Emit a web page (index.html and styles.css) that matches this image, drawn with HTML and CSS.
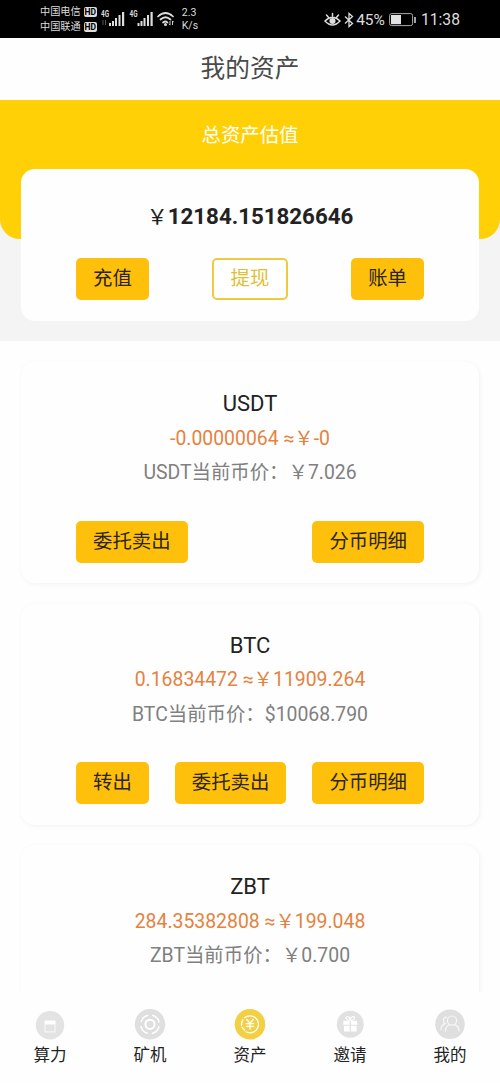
FILE: index.html
```html
<!DOCTYPE html>
<html lang="zh-CN">
<head>
<meta charset="utf-8">
<title>我的资产</title>
<link rel="stylesheet" href="styles.css">
</head>
<body>
<div class="app">
  <header class="status">
    <div class="carriers">
      <div class="carrier">中国电信<span class="hd">HD</span></div>
      <div class="carrier">中国联通<span class="hd">HD</span></div>
    </div>
    <svg class="signals" width="76" height="20" viewBox="0 0 76 20">
      <g fill="#ddd">
        <text class="g4" x="0" y="8" textLength="8" lengthAdjust="spacingAndGlyphs">4G</text>
        <text class="g4" x="28.5" y="8" textLength="8" lengthAdjust="spacingAndGlyphs">4G</text>
        <path d="M8 14h2v3h-2zM11 12h2v5h-2zM14 9h2v8h-2zM17.500 6h2v11h-2zM21 3h2.200v14h-2.200z"/>
        <path d="M36.500 14h2v3h-2zM39.500 12h2v5h-2zM42.500 9h2v8h-2zM46 6h2v11h-2zM49.500 3h2.200v14h-2.200z"/>
        <path d="M2 11v5M4.500 11v5" stroke="#555" stroke-width="1"/>
      </g>
      <g fill="none" stroke="#ddd" stroke-width="1.7" stroke-linecap="round">
        <path d="M57 7.500Q64.500 .500 72 7.500M59.500 10.500Q64.500 6 69.500 10.500M62 13.500Q64.500 11.500 66.500 13.500"/>
      </g>
      <circle cx="64.500" cy="15.500" r="1.500" fill="#ddd"/>
      <path d="M69 12v4M67.800 14.800l1.200 1.400M71.500 16v-4M71.500 11.800l1.200 1.400" fill="none" stroke="#ccc" stroke-width="1"/>
    </svg>
    <div class="speed"><span>2.3</span><span>K/s</span></div>
    <div class="right">
      <svg width="17" height="16" viewBox="0 0 17 16" fill="none" stroke="#ddd" stroke-width="1.500" stroke-linecap="round">
        <path d="M1 9Q8.500 1.500 16 9Q8.500 17 1 9ZM8.500 4V1.500M4.200 5L2.500 3M12.800 5L14.500 3"/>
        <circle cx="8.500" cy="9" r="2.300" fill="#ddd"/>
      </svg>
      <svg class="bt" width="10" height="16" viewBox="0 0 10 16" fill="none" stroke="#ddd" stroke-width="1.300">
        <path d="M1 4.500L8.500 11.500L5 14.500V1.500L8.500 4.500L1 11.500"/>
      </svg>
      <span class="pct">45%</span>
      <svg class="battery" width="28" height="14" viewBox="0 0 28 14">
        <rect x=".6" y=".6" width="23" height="12" rx="2" fill="none" stroke="#aaa" stroke-width="1"/>
        <rect x="2" y="2" width="10" height="9.200" fill="#e2e2e2"/>
        <path d="M26 4v6" stroke="#ccc" stroke-width="1.600"/>
      </svg>
      <span class="clock">11:38</span>
    </div>
  </header>

  <h1 class="title">我的资产</h1>

  <section class="hero">
    <div class="hero-bg"></div>
    <div class="hero-body">
      <div class="hero-label">总资产估值</div>
      <div class="total-card">
        <div class="total"><span class="yen">￥</span>12184.151826646</div>
        <div class="actions">
          <button class="btn">充值</button>
          <button class="btn outline">提现</button>
          <button class="btn">账单</button>
        </div>
      </div>
    </div>
  </section>

  <main class="list">
    <article class="coin">
      <h2 class="name">USDT</h2>
      <div class="amount">-0.00000064 ≈￥-0</div>
      <div class="price">USDT当前币价：￥7.026</div>
      <div class="actions">
        <button class="btn">委托卖出</button>
        <button class="btn">分币明细</button>
      </div>
    </article>
    <article class="coin">
      <h2 class="name">BTC</h2>
      <div class="amount">0.16834472 ≈￥11909.264</div>
      <div class="price">BTC当前币价：$10068.790</div>
      <div class="actions">
        <button class="btn">转出</button>
        <button class="btn">委托卖出</button>
        <button class="btn">分币明细</button>
      </div>
    </article>
    <article class="coin">
      <h2 class="name">ZBT</h2>
      <div class="amount">284.35382808 ≈￥199.048</div>
      <div class="price">ZBT当前币价：￥0.700</div>
    </article>
  </main>

  <nav class="tabs">
    <a class="tab">
      <svg width="32" height="32" viewBox="0 0 32 32">
        <circle cx="16" cy="17.200" r="14.200" fill="#e3e3e3"/>
        <rect x="10.500" y="12.600" width="11" height="3.800" rx="1" fill="#fff"/>
        <path d="M11 16v7.800h10v-7.800" fill="none" stroke="#f5f5f5" stroke-width="1.200"/>
      </svg>
      <span>算力</span>
    </a>
    <a class="tab">
      <svg width="32" height="32" viewBox="0 0 32 32">
        <circle cx="16" cy="16.300" r="15.200" fill="#dfdfdf"/>
        <circle cx="16" cy="16.300" r="9.300" fill="none" stroke="#fff" stroke-width="1.500" stroke-dasharray="10.600 4" stroke-dashoffset="-2"/>
        <circle cx="16" cy="16.300" r="4.600" fill="none" stroke="#fff" stroke-width="2"/>
      </svg>
      <span>矿机</span>
    </a>
    <a class="tab">
      <svg width="32" height="32" viewBox="0 0 32 32">
        <circle cx="16" cy="16.300" r="15.300" fill="#f3cf43"/>
        <g fill="none" stroke="#fff" stroke-width="1.300" stroke-linecap="round">
          <path d="M10.500 9.800A8.500 8.500 0 1 1 12 23.800M7.600 17.500A8.500 8.500 0 0 1 8.800 11.800M8.200 19.500L10.500 22"/>
          <path d="M12.800 11.500L16 15.200L19.200 11.500M16 15.200V21M12.300 15.700H19.700M12.300 18.300H19.700"/>
        </g>
      </svg>
      <span>资产</span>
    </a>
    <a class="tab">
      <svg width="32" height="32" viewBox="0 0 32 32">
        <circle cx="16.300" cy="16.200" r="13.500" fill="#e1e1e1"/>
        <path d="M9.300 12.800h6.400v4h-6.400zM16.900 12.800h6.400v4h-6.400zM10 17.800h5.700v5.700h-5.700zM16.900 17.800h5.700v5.700h-5.700z" fill="#fff"/>
        <path d="M16.300 12.500C12 12 11 9.500 12.800 8.700C15 8 16.300 10.500 16.300 12.500C16.300 10.500 17.600 8 19.800 8.700C21.600 9.500 20.600 12 16.300 12.500" fill="none" stroke="#fff" stroke-width="1.100"/>
      </svg>
      <span>邀请</span>
    </a>
    <a class="tab">
      <svg width="32" height="32" viewBox="0 0 32 32">
        <circle cx="16" cy="16.300" r="14.800" fill="#dfdfdf"/>
        <g fill="none" stroke="#f7f7f7" stroke-width="1.200" stroke-linecap="round">
          <circle cx="18" cy="12.600" r="4.600"/>
          <path d="M11.500 23.100C11.500 19.600 13.500 17.400 15.700 16.500M20.500 16.600C23.500 17.600 25 20.100 25 23.100M12.500 9.100C9 9.100 8.500 14.100 11 15.600C8.500 16.600 7 19.100 7 21.600"/>
        </g>
      </svg>
      <span>我的</span>
    </a>
  </nav>
</div>
</body>
</html>
```
FILE: styles.css
```css
* { box-sizing: border-box; }
body {
  margin: 0;
  background: #fefefe;
  font-family: Roboto, "Noto Sans CJK SC", sans-serif;
  font-size: 19.4px;
  color: #222;
}
.app {
  width: 500px;
  height: 1083px;
  display: flex;
  flex-direction: column;
  overflow: hidden;
}

/* Status bar */
.status {
  flex: none;
  height: 37.5px;
  padding: 2px 40px 0 40px;
  display: flex;
  align-items: center;
  background: #000;
  color: #ddd;
}
.carriers { display: flex; flex-direction: column; gap: 1px; }
.carrier {
  display: flex;
  align-items: center;
  gap: 3px;
  height: 14px;
  font-size: 10.2px;
  line-height: 14px;
}
.hd {
  width: 13px;
  height: 10px;
  border-radius: 2px;
  background: #ddd;
  color: #000;
  font-size: 8.500px;
  font-weight: 700;
  line-height: 10.500px;
  text-align: center;
}
.signals { margin: -1px 0 0 4px; }
.g4 { font: 700 8.500px Roboto, sans-serif; }
.speed {
  margin-left: 5px;
  display: flex;
  flex-direction: column;
  font-size: 10.500px;
  line-height: 12.500px;
}
.right { margin-left: auto; display: flex; align-items: center; }
.bt { margin-left: 3px; }
.pct { margin-left: 2px; font-size: 15.500px; }
.battery { margin-left: 4px; }
.clock { margin-left: 4px; font-size: 15.700px; }

.title {
  flex: none;
  margin: 0;
  height: 62.500px;
  font-size: 24.700px;
  font-weight: 400;
  line-height: 61px;
  text-align: center;
  color: #4a4a4a;
}

/* Total value */
.hero {
  flex: none;
  display: grid;
  height: 241px;
  background: #f4f4f4;
}
.hero-bg, .hero-body { grid-area: 1 / 1; }
.hero-bg {
  height: 139px;
  border-radius: 0 0 20px 20px;
  background: #ffd006;
}
.hero-body { padding: 0 21px; }
.hero-label {
  height: 69px;
  line-height: 71px;
  text-align: center;
  color: #fff;
}
.total-card {
  height: 151.500px;
  padding: 29px 55px 0;
  border-radius: 14px;
  background: #fefefe;
}
.total {
  height: 36px;
  font-size: 22.300px;
  font-weight: 700;
  line-height: 36px;
  text-align: center;
}
.yen { font-weight: 400; font-size: 21px; }
.actions { display: flex; justify-content: space-between; }
.total-card .actions { margin-top: 24px; }
.btn {
  height: 42px;
  padding: 0 17px 1px;
  border: 0;
  border-radius: 5px;
  background: #fec00b;
  color: #2c2418;
  font: inherit;
  line-height: 41px;
}
.outline {
  border: 2px solid #eccb42;
  padding: 0 16.500px;
  background: #fff;
  color: #e0bf35;
  line-height: 38px;
}

/* Coins */
.list {
  flex: 1;
  min-height: 0;
  overflow: hidden;
  padding: 21px 21px 0;
  display: flex;
  flex-direction: column;
  gap: 20.600px;
}
.coin {
  flex: none;
  height: 221px;
  padding: 25px 55px 0;
  border-radius: 14px;
  background: #fefefe;
  box-shadow: 1px 1px 5px rgba(0, 0, 0, .055);
  line-height: 34.500px;
  text-align: center;
}
.name { margin: 0; font-size: 22px; font-weight: 400; line-height: 34.500px; }
.amount { height: 34.500px; color: #e5823e; }
.price { height: 34.500px; color: #808080; }
.coin .actions { margin-top: 30px; }

/* Bottom tabs */
.tabs {
  flex: none;
  height: 91px;
  padding-top: 16px;
  display: grid;
  grid-template-columns: repeat(5, 1fr);
  background: #fefefe;
}
.tab {
  display: flex;
  flex-direction: column;
  align-items: center;
  font-size: 16.500px;
  line-height: 32px;
}
```
